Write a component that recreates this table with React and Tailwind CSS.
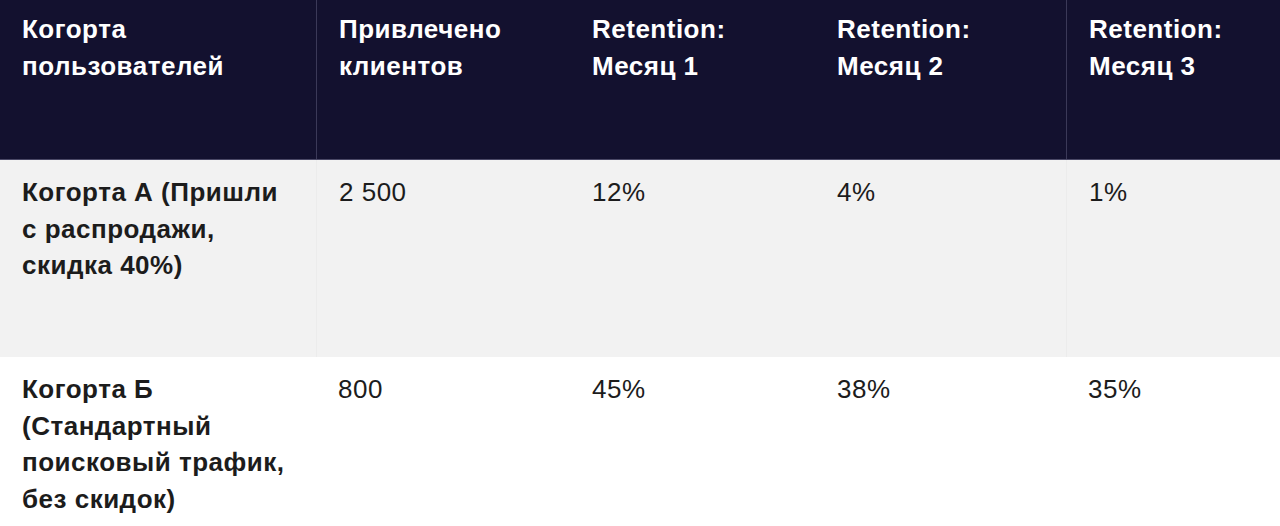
import React from 'react';

const headers = [
  ['Когорта', 'пользователей'],
  ['Привлечено', 'клиентов'],
  ['Retention:', 'Месяц 1'],
  ['Retention:', 'Месяц 2'],
  ['Retention:', 'Месяц 3'],
];

const rows = [
  {
    bg: 'bg-[#f2f2f2]',
    h: 'h-[197px]',
    cells: [['Когорта А (Пришли', 'с распродажи,', 'скидка 40%)'], '2 500', '12%', '4%', '1%'],
  },
  {
    bg: 'bg-white',
    h: 'h-[180px]',
    cells: [['Когорта Б', '(Стандартный', 'поисковый трафик,', 'без скидок)'], '800', '45%', '38%', '35%'],
  },
];

const cols = 'grid grid-cols-[316px_254px_245px_251px_1fr]';

const App = () => {
  return (
    <div className="w-[1280px] h-[526px] overflow-hidden bg-white font-['Liberation_Sans',Arial,sans-serif] text-[26px] leading-[36.5px] tracking-[0.5px]">
      <div className={`${cols} h-[160px] bg-[#13112f] text-white font-bold border-b border-[#4a4866]`}>
        {headers.map((h, i) => (
          <div
            key={i}
            className={`pl-[22px] pt-[11px] ${i === 1 || i === 4 ? 'border-l border-[#3b3958]' : ''}`}
          >
            {h.map((line) => (
              <div key={line}>{line}</div>
            ))}
          </div>
        ))}
      </div>
      {rows.map((r, ri) => (
        <div key={ri} className={`${cols} ${r.bg} ${r.h} text-[#1c1c1c]`}>
          {r.cells.map((c, i) => (
            <div
              key={i}
              className={`pl-[22px] pt-[14px] ${i === 0 ? 'font-bold' : ''} ${
                ri === 0 && (i === 1 || i === 4) ? 'border-l border-[#ececec]' : ''
              }`}
            >
              {Array.isArray(c) ? c.map((line) => <div key={line}>{line}</div>) : c}
            </div>
          ))}
        </div>
      ))}
    </div>
  );
};

export default App;
